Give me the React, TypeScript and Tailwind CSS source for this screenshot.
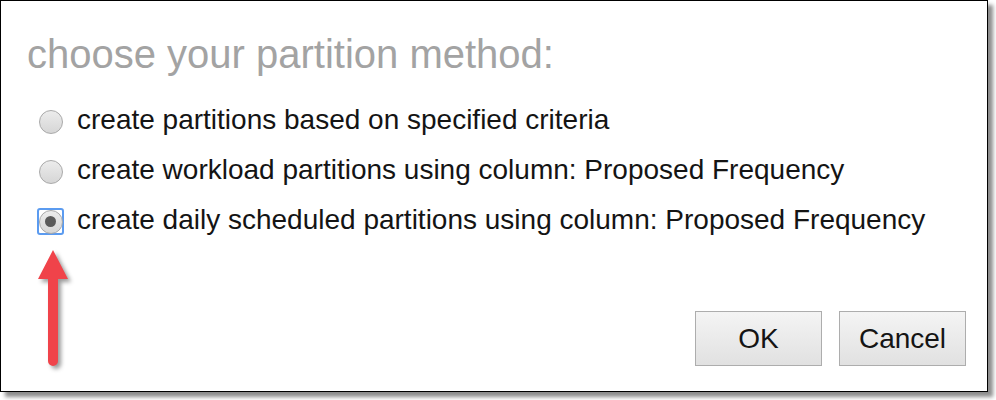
const options = [
  "create partitions based on specified criteria",
  "create workload partitions using column: Proposed Frequency",
  "create daily scheduled partitions using column: Proposed Frequency",
];

const Radio = ({ checked }: { checked: boolean }) => (
  <span
    className={`flex h-[27px] w-[27px] shrink-0 items-center justify-center rounded-[3px] border-2 ${
      checked ? "border-[#5b9bf0]" : "border-transparent"
    }`}
  >
    <span className="flex h-[24px] w-[24px] shrink-0 items-center justify-center rounded-full border border-[#a9a9a9] bg-gradient-to-b from-[#ececec] to-[#d6d6d6]">
      {checked && <span className="h-[11px] w-[11px] rounded-full bg-[#5a5a5a]" />}
    </span>
  </span>
);

const App = () => {
  const selected = 2;

  return (
    <div className="h-[400px] w-[996px] bg-white font-['Liberation_Sans',Arial,sans-serif]">
      <div className="relative flex h-[392px] w-[988px] flex-col border border-black bg-white shadow-[5px_5px_4px_rgba(0,0,0,0.45)]">
        <h1 className="pl-[26px] pt-[33px] text-[40px] leading-[40px] text-[#a3a3a3]">
          choose your partition method:
        </h1>

        <div className="mt-[21px] flex flex-col pl-[36px]">
          {options.map((label, i) => (
            <div key={i} className="flex h-[50px] items-center gap-[13px]">
              <span className="mt-[3px]">
                <Radio checked={i === selected} />
              </span>
              <span className="text-[28px] text-[#141414]">{label}</span>
            </div>
          ))}
        </div>

        <div className="mb-[25px] mr-[21px] mt-auto flex justify-end gap-[17px]">
          <button className="h-[55px] w-[127px] border border-[#adadad] bg-gradient-to-b from-[#f4f4f4] to-[#e1e1e1] text-[28px] text-[#141414]">
            OK
          </button>
          <button className="h-[55px] w-[127px] border border-[#adadad] bg-gradient-to-b from-[#f4f4f4] to-[#e1e1e1] text-[28px] text-[#141414]">
            Cancel
          </button>
        </div>

        {/* annotation arrow */}
        <svg
          className="absolute left-[33px] top-[244px] h-[130px] w-[40px] drop-shadow-[3px_3px_2px_rgba(0,0,0,0.4)]"
          viewBox="0 0 40 130"
        >
          <path
            d="M19 5 L34 34 L24 34 L24 116 A5 5 0 0 1 14 116 L14 34 L4 34 Z"
            fill="#f0434a"
          />
        </svg>
      </div>
    </div>
  );
};

export default App;
